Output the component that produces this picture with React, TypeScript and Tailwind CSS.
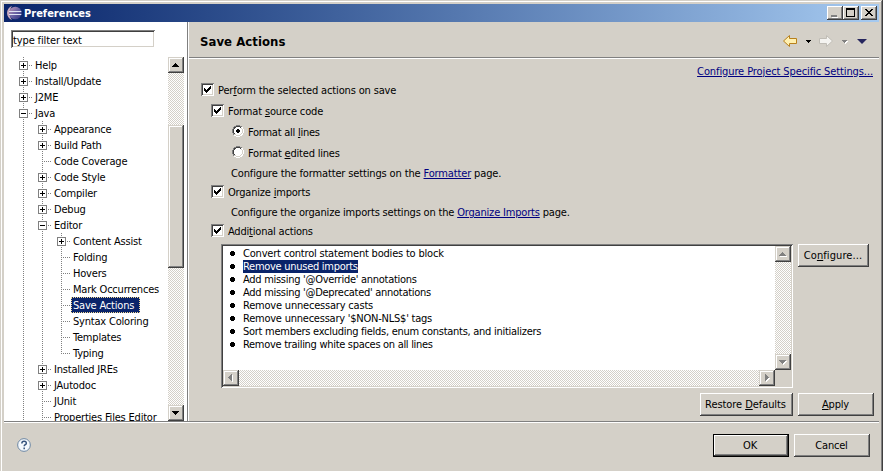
import React from "react";

const RAISED = "bg-[#d4d0c8] shadow-[inset_-1px_-1px_#404040,inset_1px_1px_#d4d0c8,inset_-2px_-2px_#808080,inset_2px_2px_#fff]";
const BUTTON = "bg-[#d4d0c8] shadow-[inset_-1px_-1px_#404040,inset_1px_1px_#fff,inset_-2px_-2px_#808080]";
const SUNKEN = "shadow-[inset_1px_1px_#808080,inset_-1px_-1px_#fff,inset_2px_2px_#404040,inset_-2px_-2px_#d4d0c8]";
const TRACK = "bg-[repeating-conic-gradient(#d4d0c8_0_25%,#fff_0_50%)] bg-[length:2px_2px]";

type Dir = "up" | "down" | "left" | "right";
const ARROWS: Record<Dir, string> = {
  up: "M7 6h1v1h1v1h1v1h1v1H4V9h1V8h1V7h1z",
  down: "M4 6h7v1h-1v1H9v1H8v1H7V9H6V8H5V7H4z",
  left: "M9 4v7H8v-1H7V9H6V8H5V7h1V6h1V5h1V4z",
  right: "M6 4h1v1h1v1h1v1h1v1H9v1H8v1H7v1H6z",
};

function ScrollButton({ dir, disabled }: { dir: Dir; disabled?: boolean }) {
  return (
    <div className={`h-4 w-4 shrink-0 ${RAISED}`}>
      <svg width="16" height="16" shapeRendering="crispEdges" className="block">
        {disabled && <path d={ARROWS[dir]} fill="#fff" transform="translate(1 1)" />}
        <path d={ARROWS[dir]} fill={disabled ? "#808080" : "#000"} />
      </svg>
    </div>
  );
}

type Node = { label: string; level: number; box?: "+" | "-"; last?: boolean; selected?: boolean };
const NODES: Node[] = [
  { label: "Help", level: 0, box: "+" },
  { label: "Install/Update", level: 0, box: "+" },
  { label: "J2ME", level: 0, box: "+" },
  { label: "Java", level: 0, box: "-" },
  { label: "Appearance", level: 1, box: "+" },
  { label: "Build Path", level: 1, box: "+" },
  { label: "Code Coverage", level: 1 },
  { label: "Code Style", level: 1, box: "+" },
  { label: "Compiler", level: 1, box: "+" },
  { label: "Debug", level: 1, box: "+" },
  { label: "Editor", level: 1, box: "-" },
  { label: "Content Assist", level: 2, box: "+" },
  { label: "Folding", level: 2 },
  { label: "Hovers", level: 2 },
  { label: "Mark Occurrences", level: 2 },
  { label: "Save Actions", level: 2, selected: true },
  { label: "Syntax Coloring", level: 2 },
  { label: "Templates", level: 2 },
  { label: "Typing", level: 2, last: true },
  { label: "Installed JREs", level: 1, box: "+" },
  { label: "JAutodoc", level: 1, box: "+" },
  { label: "JUnit", level: 1 },
  { label: "Properties Files Editor", level: 1 },
];

function TreeRow({ node }: { node: Node }) {
  const w = 19 * (node.level + 1);
  const cx = node.level * 19 + 8;
  return (
    <div className="flex h-4 shrink-0 pl-[11px]">
      <svg width={w} height="16" shapeRendering="crispEdges" className="shrink-0">
        <g stroke="#808080" strokeDasharray="1 1">
          {Array.from({ length: node.level + 1 }, (_, i) => (
            <path key={i} d={`M${i * 19 + 8.5} 0V${node.last && i === node.level ? 9 : 16}`} />
          ))}
          <path d={`M${cx} 8.5h10`} />
        </g>
        {node.box && (
          <g>
            <rect x={cx - 3.5} y="4.5" width="8" height="8" fill="#fff" stroke="#808080" />
            <path d={node.box === "+" ? `M${cx - 2} 8.5h5M${cx + 0.5} 6v5` : `M${cx - 2} 8.5h5`} stroke="#000" />
          </g>
        )}
      </svg>
      <span
        className={
          node.selected
            ? "-ml-px h-4 w-[69px] shrink-0 bg-[#0a246a] pl-[2px] leading-[17px] whitespace-nowrap text-white outline-1 -outline-offset-1 outline-dotted outline-[#f5db95]"
            : "pl-px leading-[17px] whitespace-nowrap"
        }
      >
        {node.label}
      </span>
    </div>
  );
}

function Check() {
  return (
    <span className={`h-[13px] w-[13px] shrink-0 bg-white ${SUNKEN}`}>
      <svg width="13" height="13" shapeRendering="crispEdges" className="block">
        <path d="M3 5h1v1h1v1h1V6h1V5h1V4h1V3h1v3H9v1H8v1H7v1H6v1H5V9H4V8H3z" />
      </svg>
    </span>
  );
}

function Radio({ on }: { on?: boolean }) {
  return (
    <svg width="12" height="12" className="mb-px shrink-0" shapeRendering="crispEdges">
      <path d="M4 1h4v1h2v2h1v4h-1v2H8v1H4v-1H2V8H1V4h1V2h2z" fill="#fff" />
      <path d="M4 0h4v1H4zM2 1h2v1H2zM8 1h2v1H8zM1 2h1v2H1zM0 4h1v4H0zM1 8h1v2H1z" fill="#808080" />
      <path d="M4 1h4v1H4zM2 2h2v1H2zM8 2h1v1H8zM2 3h1v1H2zM1 4h1v4H1zM2 8h1v1H2z" fill="#404040" />
      <path d="M10 2h1v2h-1zM11 4h1v4h-1zM10 8h1v2h-1zM8 10h2v1H8zM4 11h4v1H4zM2 10h2v1H2z" fill="#fff" />
      <path d="M9 3h1v1H9zM10 4h1v4h-1zM9 8h1v1H9zM8 9h1v1H8zM4 10h4v1H4zM2 9h2v1H2z" fill="#d4d0c8" />
      {on && <path d="M5 4h2v1h1v2H7v1H5V7H4V5h1z" />}
    </svg>
  );
}

const U = ({ children }: { children: React.ReactNode }) => <u className="underline decoration-1 underline-offset-1">{children}</u>;
const Link = ({ children }: { children: React.ReactNode }) => (
  <a className="text-[#000080] underline decoration-1 underline-offset-1">{children}</a>
);

const ACTIONS = [
  { text: "Convert control statement bodies to block", tracking: "tracking-[-0.2px]" },
  { text: "Remove unused imports", tracking: "tracking-[-0.28px]", selected: true },
  { text: "Add missing '@Override' annotations", tracking: "tracking-[-0.28px]" },
  { text: "Add missing '@Deprecated' annotations", tracking: "tracking-[-0.28px]" },
  { text: "Remove unnecessary casts", tracking: "tracking-[-0.2px]" },
  { text: "Remove unnecessary '$NON-NLS$' tags", tracking: "tracking-[-0.23px]" },
  { text: "Sort members excluding fields, enum constants, and initializers", tracking: "tracking-[-0.27px]" },
  { text: "Remove trailing white spaces on all lines", tracking: "tracking-[-0.3px]" },
];

function TitleBar() {
  return (
    <div className="flex h-[18px] shrink-0 items-center bg-linear-to-r from-[#0a246a] to-[#a6caf0] pr-[2px] pl-[3px]">
      <svg width="15" height="14" viewBox="0 0 15 14" className="mr-[2px]">
        <defs>
          <linearGradient id="ball" x1="0" y1="0" x2="1" y2="1">
            <stop offset="0" stopColor="#c49ab5" />
            <stop offset=".5" stopColor="#6b64a6" />
            <stop offset="1" stopColor="#2b2f7c" />
          </linearGradient>
        </defs>
        <path d="M5 0C2 1 0 4 0 7s2 6 5 7C3 11 2.500 9 2.500 7S3 3 5 0z" fill="#c9a9bd" />
        <circle cx="8.300" cy="7" r="6.300" fill="url(#ball)" />
        <path d="M2 5.500h12.300M2 8.500h12.300" stroke="#dfe4f4" strokeWidth="1" />
      </svg>
      <span className="grow pt-px text-[11px] leading-[17px] font-bold tracking-[0px] text-white">Preferences</span>
      <div className={`h-[14px] w-4 ${BUTTON}`}>
        <svg width="16" height="14" shapeRendering="crispEdges" className="block">
          <path d="M5 11h6v1H5z" fill="#fff" />
          <path d="M4 9h6v2H4z" fill="#808080" />
        </svg>
      </div>
      <div className={`h-[14px] w-4 ${BUTTON}`}>
        <svg width="16" height="14" shapeRendering="crispEdges" className="block">
          <path d="M3 2h9v9H3zM4 4v6h7V4z" fillRule="evenodd" />
        </svg>
      </div>
      <div className={`ml-[2px] h-[14px] w-4 ${BUTTON}`}>
        <svg width="16" height="14" shapeRendering="crispEdges" className="block">
          <path d="M4 3h2v1h1v1h2V4h1V3h2v1h-1v1h-1v1H9v1h1v1h1v1h1v1h-2V9H9V8H7v1H6v1H4V9h1V8h1V7h1V6H6V5H5V4H4z" />
        </svg>
      </div>
    </div>
  );
}

export default function App() {
  return (
    <div className="flex h-[472px] w-[883px] flex-col overflow-hidden bg-white font-['DejaVu_Sans_Condensed','DejaVu_Sans',sans-serif] text-[11px] tracking-[-0.2px] text-black [font-stretch:condensed]">
      <div className="flex h-[471px] flex-col bg-[#d4d0c8] pt-1 pr-1 pl-1 shadow-[inset_-1px_0_#404040,inset_0_1px_#d4d0c8,inset_1px_0_#d4d0c8,inset_-2px_0_#808080,inset_2px_2px_#fff]">
        <TitleBar />
        <div className="flex h-[399px] shrink-0">
          <aside className="flex w-[183px] shrink-0 flex-col bg-white">
            <div className={`mt-2 ml-[7px] h-[18px] w-[144px] shrink-0 pl-[2px] leading-[21px] tracking-[-0.13px] ${SUNKEN}`}>type filter text</div>
            <div className="mt-[9px] flex h-[364px] overflow-hidden">
              <div className="flex w-[164px] flex-col overflow-hidden">
                {NODES.map((n) => (
                  <TreeRow key={n.label} node={n} />
                ))}
              </div>
              <div className={`flex w-4 flex-col ${TRACK}`}>
                <ScrollButton dir="up" />
                <div className={`mt-[52px] h-[143px] ${RAISED}`} />
                <div className="grow" />
                <ScrollButton dir="down" />
              </div>
            </div>
          </aside>
          <div className="w-[2px] border-l border-[#808080] bg-white" />
          <main className="flex w-[690px] flex-col">
            <header className="flex h-[37px] shrink-0 items-center border-b border-white pl-[11px] shadow-[inset_0_-1px_#808080]">
              <h1 className="grow pt-[3px] text-[13px] leading-4 font-bold tracking-[0.05px]">Save Actions</h1>
              <svg width="98" height="20" viewBox="0 0 98 20" className="shrink-0">
                <path d="M2.500 11L8.500 5.500v3h7v5h-7v3z" fill="#fff0b0" stroke="#b8801c" strokeLinejoin="round" />
                <path d="M25 10h5v1h-1v1h-1v1h-1v-1h-1v-1h-1z" fill="#000" shapeRendering="crispEdges" />
                <path d="M51.500 11L45.500 5.500v3h-7v5h7v3z" fill="#f4f3f0" stroke="#c0bdb6" strokeLinejoin="round" />
                <path d="M62 11h5v1h-1v1h-1v1h-1v-1h-1v-1h-1z" fill="#fff" shapeRendering="crispEdges" />
                <path d="M61 10h5v1h-1v1h-1v1h-1v-1h-1v-1h-1z" fill="#808080" shapeRendering="crispEdges" />
                <path d="M76 9h10l-5 5z" fill="#26265e" />
              </svg>
            </header>
            <div className="flex h-[24px] shrink-0 items-center justify-end pt-[2px] pr-[6px] tracking-[-0.1px]">
              <Link>Configure Project Specific Settings...</Link>
            </div>
            <div className="flex h-[13px] items-center gap-1 pl-3">
              <Check />
              <span className="pt-[4px] tracking-[-0.15px]">Per<U>f</U>orm the selected actions on save</span>
            </div>
            <div className="mt-2 flex h-[13px] items-center gap-1 pl-[22px]">
              <Check />
              <span className="pt-[4px] tracking-[-0.15px]">Format <U>s</U>ource code</span>
            </div>
            <div className="mt-2 flex h-[13px] items-center gap-1 pl-[43px]">
              <Radio on />
              <span className="pt-[4px] tracking-[-0.25px]">Format all <U>l</U>ines</span>
            </div>
            <div className="mt-2 flex h-[13px] items-center gap-1 pl-[43px]">
              <Radio />
              <span className="pt-[4px]">Format <U>e</U>dited lines</span>
            </div>
            <div className="mt-[7px] flex h-[13px] items-center pl-[42px]">
              <span className="pt-[4px] tracking-[-0.14px]">Configure the formatter settings on the <Link>Formatter</Link> page.</span>
            </div>
            <div className="mt-[6px] flex h-[13px] items-center gap-1 pl-[22px]">
              <Check />
              <span className="pt-[4px]">Organize <U>i</U>mports</span>
            </div>
            <div className="mt-[7px] flex h-[13px] items-center pl-[42px]">
              <span className="pt-[4px] tracking-[-0.18px]">Configure the organize imports settings on the <Link>Organize Imports</Link> page.</span>
            </div>
            <div className="mt-[6px] flex h-[13px] items-center gap-1 pl-[22px]">
              <Check />
              <span className="pt-[4px]">Addi<U>t</U>ional actions</span>
            </div>
            <div className="mt-[7px] flex gap-[5px] pl-8">
              <div className={`flex h-[144px] w-[572px] flex-col bg-white p-[2px] ${SUNKEN}`}>
                <div className="flex h-[124px]">
                  <ul className="w-[552px] pt-px pl-[7px]">
                    {ACTIONS.map((a) => (
                      <li key={a.text} className={`flex h-[13px] items-center ${a.tracking}`}>
                        <svg width="13" height="5" shapeRendering="crispEdges">
                          <path d="M1 0h3v1h1v3H4v1H1V4H0V1h1z" />
                        </svg>
                        <span className={a.selected ? "h-[13px] bg-[#0a246a] leading-[13px] text-white" : "leading-[13px]"}>{a.text}</span>
                      </li>
                    ))}
                  </ul>
                  <div className={`flex w-4 flex-col justify-between ${TRACK}`}>
                    <ScrollButton dir="up" disabled />
                    <ScrollButton dir="down" disabled />
                  </div>
                </div>
                <div className="flex h-4 bg-[#d4d0c8]">
                  <div className={`flex w-[552px] justify-between ${TRACK}`}>
                    <ScrollButton dir="left" disabled />
                    <ScrollButton dir="right" disabled />
                  </div>
                </div>
              </div>
              <button className={`h-[23px] w-[71px] pt-[2px] pr-px tracking-[0.1px] ${BUTTON}`}>Co<U>n</U>figure...</button>
            </div>
            <div className="mt-[5px] flex justify-end gap-[5px] pr-[5px]">
              <button className={`h-[23px] w-[93px] pt-[2px] pr-[2px] tracking-[-0.07px] ${BUTTON}`}>Restore <U>D</U>efaults</button>
              <button className={`h-[23px] w-[76px] pt-[2px] pr-px ${BUTTON}`}><U>A</U>pply</button>
            </div>
          </main>
        </div>
        <footer className="flex h-[49px] shrink-0 items-center border-t border-[#808080] pr-[9px] pb-px pl-[13px] shadow-[inset_0_1px_#fff]">
          <svg width="14" height="14" viewBox="0 0 15 15" className="mb-px">
            <circle cx="7.500" cy="7.500" r="6.800" fill="#f4f8fc" stroke="#64809f" />
            <path d="M5.200 5.800c0-3 4.800-3 4.800-.3 0 1.700-2.300 1.700-2.300 3.400M7.700 10.300v1.700" fill="none" stroke="#36537c" strokeWidth="1.600" />
          </svg>
          <div className="grow" />
          <button className={`mr-[5px] h-[23px] w-[76px] border border-black pt-[2px] pr-[2px] ${BUTTON}`}>OK</button>
          <button className={`h-[23px] w-[76px] pt-[2px] pr-px ${BUTTON}`}>Cancel</button>
        </footer>
      </div>
    </div>
  );
}
